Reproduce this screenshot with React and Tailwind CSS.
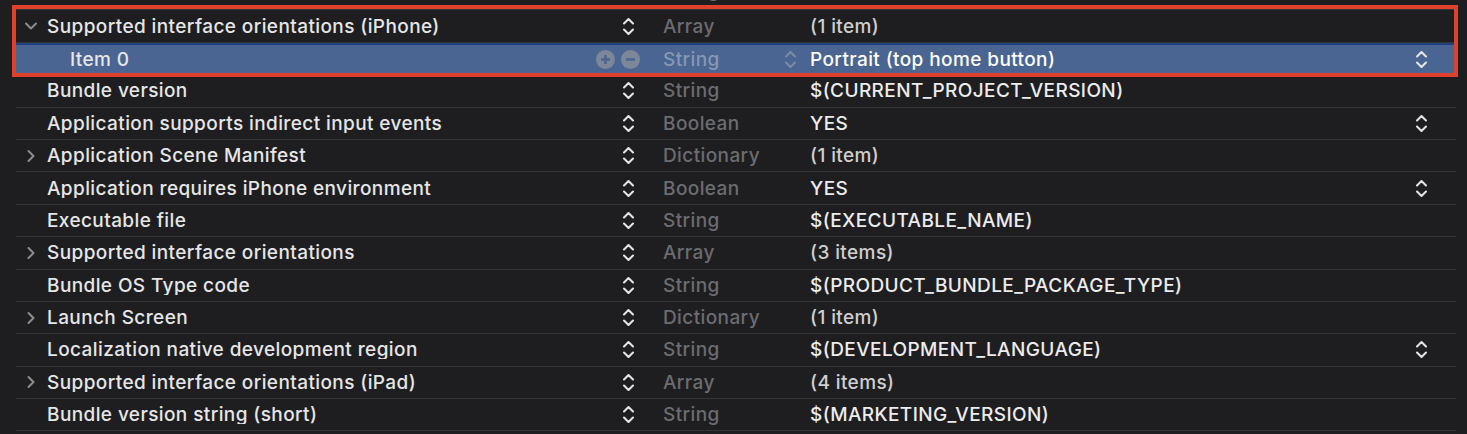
import React from 'react';

// Info.plist editor rows, Xcode dark theme
const rows = [
    { key: 'Bundle display name', type: 'String', value: '$(PRODUCT_NAME)', top: true },
    { key: 'Supported interface orientations (iPhone)', type: 'Array', value: '(1 item)', disclosure: 'open', count: true },
    { key: 'Item 0', type: 'String', value: 'Portrait (top home button)', child: true, selected: true, picker: true },
    { key: 'Bundle version', type: 'String', value: '$(CURRENT_PROJECT_VERSION)' },
    { key: 'Application supports indirect input events', type: 'Boolean', value: 'YES', picker: true },
    { key: 'Application Scene Manifest', type: 'Dictionary', value: '(1 item)', disclosure: 'closed', count: true },
    { key: 'Application requires iPhone environment', type: 'Boolean', value: 'YES', picker: true },
    { key: 'Executable file', type: 'String', value: '$(EXECUTABLE_NAME)' },
    { key: 'Supported interface orientations', type: 'Array', value: '(3 items)', disclosure: 'closed', count: true },
    { key: 'Bundle OS Type code', type: 'String', value: '$(PRODUCT_BUNDLE_PACKAGE_TYPE)' },
    { key: 'Launch Screen', type: 'Dictionary', value: '(1 item)', disclosure: 'closed', count: true },
    { key: 'Localization native development region', type: 'String', value: '$(DEVELOPMENT_LANGUAGE)', picker: true },
    { key: 'Supported interface orientations (iPad)', type: 'Array', value: '(4 items)', disclosure: 'closed', count: true },
    { key: 'Bundle version string (short)', type: 'String', value: '$(MARKETING_VERSION)' },
];

function Stepper({ dim }) {
    return (
        <svg width="13" height="21" viewBox="0 0 13 21" fill="none" stroke={dim ? '#7a8aa6' : '#e4e4e6'} strokeWidth="2.1" strokeLinecap="round" strokeLinejoin="round">
            <path d="M2 7.5 L6.5 3 L11 7.5" />
            <path d="M2 13.5 L6.5 18 L11 13.5" />
        </svg>
    );
}

function Disclosure({ open }) {
    return (
        <svg width="16" height="16" viewBox="0 0 16 16" fill="none" stroke="#8e8e92" strokeWidth="2" strokeLinecap="round" strokeLinejoin="round">
            {open ? <path d="M3 5.5 L8 10.5 L13 5.5" /> : <path d="M5.5 3 L10.5 8 L5.5 13" />}
        </svg>
    );
}

function RoundButton({ plus }) {
    return (
        <svg width="19" height="19" viewBox="0 0 19 19">
            <circle cx="9.5" cy="9.5" r="9.5" fill="#7d879a" />
            <path d="M5 9.5 H14" stroke="#4b6690" strokeWidth="2.6" />
            {plus && <path d="M9.5 5 V14" stroke="#4b6690" strokeWidth="2.6" />}
        </svg>
    );
}

function Row({ row }) {
    return (
        <div className={`flex items-center h-[32.4px] w-[1440px] ml-4 shrink-0 ${row.top ? 'pb-[6px]' : ''} ${row.selected ? 'bg-[#4a6591] border-t-2 border-t-[#1f3f80]' : 'border-b border-[#343437]'}`}>
            <div className="w-[31px] flex justify-center pr-[2px]">
                {row.disclosure && <Disclosure open={row.disclosure === 'open'} />}
            </div>
            <div className={`w-[551px] truncate text-[#e6e6e8] ${row.child ? 'pl-[23px]' : ''}`}>{row.key}</div>
            <div className="w-[42px] flex justify-end items-center pr-[5px]">
                {row.selected ? (
                    <div className="flex gap-[6px] -mr-[5px]">
                        <RoundButton plus />
                        <RoundButton />
                    </div>
                ) : (
                    <Stepper />
                )}
            </div>
            <div className="w-[23px]" />
            <div className={`w-[117px] ${row.selected ? 'text-[#8797b4]' : 'text-[#6c6c70]'}`}>{row.type}</div>
            <div className="w-[20px] flex justify-center">
                {row.selected && <Stepper dim />}
            </div>
            <div className="w-[10px]" />
            <div className={`flex-1 ${row.count ? 'text-[#cfcfd1]' : 'text-[#ececee]'} ${row.selected ? 'text-white' : ''}`}>{row.value}</div>
            <div className="w-[13px] mr-[28px] flex justify-center">
                {row.picker && <Stepper />}
            </div>
        </div>
    );
}

export default function App() {
    return (
        <div className="relative w-[1467px] h-[434px] overflow-hidden bg-[#1e1e20] text-[19px] font-medium tracking-[0.4px] font-['Inter','Liberation_Sans',sans-serif] leading-none">
            <div className="flex flex-col mt-[-22px]">
                {rows.map((row, i) => (
                    <Row key={i} row={row} />
                ))}
            </div>
            {/* red highlight annotation */}
            <div className="absolute left-[12px] top-[5px] w-[1446px] h-[72px] border-4 border-[#e0402c] pointer-events-none" />
        </div>
    );
}
